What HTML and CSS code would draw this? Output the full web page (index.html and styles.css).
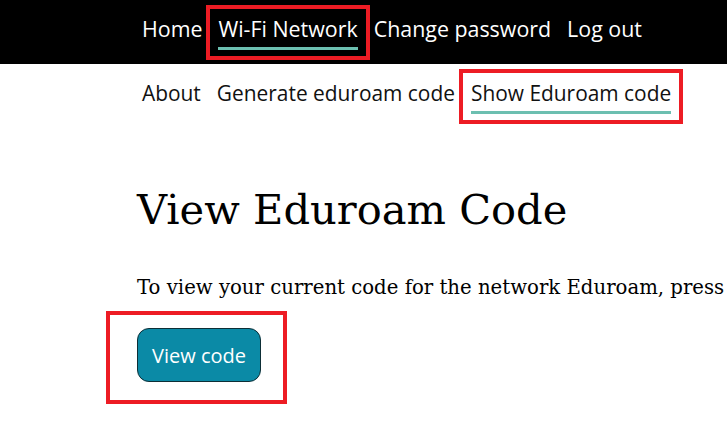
FILE: index.html
```html
<!DOCTYPE html>
<html lang="en">

<head>
    <meta charset="UTF-8">
    <meta name="viewport" content="width=device-width, initial-scale=1.0">
    <title>View Eduroam Code</title>
    <link rel="stylesheet" href="styles.css">
</head>

<body>
    <header class="top-bar">
        <nav class="main-nav">
            <a href="#" class="nav-link"><span>Home</span></a>
            <a href="#" class="nav-link active marked"><span>Wi-Fi Network</span></a>
            <a href="#" class="nav-link"><span>Change password</span></a>
            <a href="#" class="nav-link"><span>Log out</span></a>
        </nav>
    </header>

    <nav class="sub-nav">
        <a href="#" class="nav-link"><span>About</span></a>
        <a href="#" class="nav-link"><span>Generate eduroam code</span></a>
        <a href="#" class="nav-link active marked"><span>Show Eduroam code</span></a>
    </nav>

    <main class="content">
        <h1>View Eduroam Code</h1>
        <p class="intro">To view your current code for the network Eduroam, press the button below.</p>
        <div class="code-form marked-box">
            <button type="button" class="btn-primary">View code</button>
        </div>
    </main>
</body>

</html>
```

FILE: styles.css
```css
* {
    margin: 0;
    padding: 0;
    box-sizing: border-box;
}
body {
    background-color: #fff;
    font-family: 'Open Sans', 'Noto Sans', sans-serif;
    overflow: hidden;
}
.top-bar {
    background-color: #000;
    height: 64px;
    display: flex;
    align-items: center;
}
.main-nav,
.sub-nav {
    display: flex;
    align-items: center;
    padding-left: 134px;
}
.sub-nav {
    height: 64px;
}
.nav-link {
    display: block;
    padding: 6px 8px;
    font-size: 21.4px;
    line-height: 28px;
    text-decoration: none;
    color: #111;
}
.sub-nav .nav-link {
    font-size: 20.9px;
}
.main-nav .nav-link {
    color: #fff;
}
.nav-link span {
    display: block;
    padding-bottom: 4px;
    border-bottom: 3px solid transparent;
}
.nav-link.active span {
    border-bottom-color: #6cbfb0;
}
.marked {
    outline: 4px solid #ed1c24;
}
.content {
    padding-left: 137px;
}
.content h1 {
    font-family: 'DejaVu Serif', 'Liberation Serif', serif;
    font-weight: normal;
    font-size: 41.6px;
    line-height: 48px;
    margin-top: 58px;
    color: #000;
}
.intro {
    font-family: 'DejaVu Serif', 'Liberation Serif', serif;
    font-size: 19.7px;
    line-height: 28px;
    margin-top: 40px;
    white-space: nowrap;
    color: #000;
}
.code-form {
    display: inline-block;
    margin-left: -31px;
    margin-top: 9px;
    padding: 13px 22px 18px 27px;
    border: 4px solid #ed1c24;
}
.btn-primary {
    display: block;
    width: 124px;
    height: 54px;
    background-color: #0b8aa6;
    color: #fff;
    border: 1px solid #0d2e36;
    border-radius: 12px;
    font-family: 'Open Sans', 'Noto Sans', sans-serif;
    font-size: 20px;
    cursor: pointer;
}
```
